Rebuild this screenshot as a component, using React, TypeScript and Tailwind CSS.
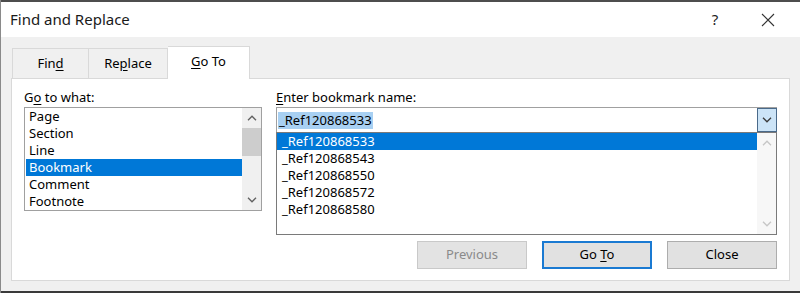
import React from "react";

const font = { fontFamily: '"Noto Sans", "Open Sans", Arial, sans-serif' };

function ChevronUp({ color = "#606060" }: { color?: string }) {
  return (
    <svg width="10" height="6" viewBox="0 0 10 6">
      <path d="M1 5.2 L5 1.2 L9 5.2" fill="none" stroke={color} strokeWidth="1.3" />
    </svg>
  );
}
function ChevronDown({ color = "#606060" }: { color?: string }) {
  return (
    <svg width="10" height="6" viewBox="0 0 10 6">
      <path d="M1 0.8 L5 4.8 L9 0.8" fill="none" stroke={color} strokeWidth="1.3" />
    </svg>
  );
}

const leftItems = ["Page", "Section", "Line", "Bookmark", "Comment", "Footnote"];
const refs = ["_Ref120868533", "_Ref120868543", "_Ref120868550", "_Ref120868572", "_Ref120868580"];

export default function App() {
  return (
    <div
      className="w-[800px] h-[293px] flex flex-col bg-[#f0f0f0] text-black overflow-hidden border-l border-[#8a8a8a]"
      style={font}
    >
      <div className="h-[2px] bg-[#4d4d4d]" />
      {/* Title bar */}
      <div className="h-[35px] bg-white flex items-center pl-[9px] shrink-0">
        <span className="text-[15px] text-[#1a1a1a]">Find and Replace</span>
        <div className="ml-auto flex items-center">
          <span className="text-[15px] text-[#222] w-[20px] text-center mr-[36px]">?</span>
          <svg width="14" height="14" viewBox="0 0 14 14" className="mr-[25px]">
            <path d="M1 1 L13 13 M13 1 L1 13" stroke="#333" strokeWidth="1.1" fill="none" />
          </svg>
        </div>
      </div>
      {/* Body */}
      <div className="flex-1 flex flex-col pl-[10px] pr-[10px] pt-[9px]">
        {/* Tabs */}
        <div className="h-[32px] flex items-end pl-[1px] text-[13px] relative z-10">
          <div className="w-[77px] h-[30px] border border-b-0 border-[#d9d9d9] flex items-center justify-center">
            <span>
              Fin<span className="underline underline-offset-2">d</span>
            </span>
          </div>
          <div className="w-[79px] h-[30px] border border-l-0 border-b-0 border-[#d9d9d9] flex items-center justify-center">
            <span>
              Re<span className="underline underline-offset-2">p</span>lace
            </span>
          </div>
          <div className="w-[82px] h-[33px] -mb-[1px] bg-white border border-l-0 border-b-0 border-[#d9d9d9] flex items-center justify-center pb-[2px]">
            <span>
              <span className="underline underline-offset-2">G</span>o To
            </span>
          </div>
        </div>
        {/* Panel */}
        <div className="h-[203px] bg-white border border-[#d9d9d9] flex flex-col px-[12px] pt-[9px] text-[13px]">
          <div className="flex gap-[14px]">
            {/* Left column */}
            <div className="w-[238px] flex flex-col">
              <div className="h-[18px] leading-[18px] mb-[1px]">
                G<span className="underline underline-offset-2">o</span> to what:
              </div>
              <div className="h-[104px] border border-[#a0a0a0] flex">
                <div className="flex-1 flex flex-col">
                  {leftItems.map((it) => (
                    <div
                      key={it}
                      className={
                        "h-[17px] leading-[17px] pl-[3px] ml-[1px] " +
                        (it === "Bookmark" ? "bg-[#0078d7] text-white" : "")
                      }
                    >
                      {it}
                    </div>
                  ))}
                </div>
                <div className="w-[19px] bg-[#f0f0f0] flex flex-col">
                  <div className="h-[20px] flex items-center justify-center">
                    <ChevronUp />
                  </div>
                  <div className="h-[28px] bg-[#cdcdcd]" />
                  <div className="flex-1" />
                  <div className="h-[20px] flex items-center justify-center">
                    <ChevronDown />
                  </div>
                </div>
              </div>
            </div>
            {/* Right column */}
            <div className="flex-1 flex flex-col">
              <div className="h-[18px] leading-[18px] mb-[1px]">
                <span className="underline underline-offset-2">E</span>nter bookmark name:
              </div>
              <div className="h-[25px] border border-[#a0a0a0] border-b-0 flex">
                <div className="flex-1 flex items-center pl-[1px]">
                  <span className="bg-[#a8d0f2] h-[17px] leading-[17px] px-[1px]">_Ref120868533</span>
                </div>
                <div className="w-[20px] h-[24px] -mr-[1px] bg-[#cce4f7] border border-[#4a6a8a] flex items-center justify-center">
                  <ChevronDown color="#3a3a3a" />
                </div>
              </div>
              <div className="h-[103px] border border-[#7a7a7a] flex">
                <div className="flex-1 flex flex-col">
                  {refs.map((r, i) => (
                    <div
                      key={r}
                      className={
                        "h-[17px] leading-[17px] pl-[5px] " + (i === 0 ? "bg-[#0078d7] text-white" : "")
                      }
                    >
                      {r}
                    </div>
                  ))}
                </div>
                <div className="w-[19px] bg-[#f7f7f7] flex flex-col">
                  <div className="h-[20px] flex items-center justify-center">
                    <ChevronUp color="#c6c6c6" />
                  </div>
                  <div className="flex-1" />
                  <div className="h-[20px] flex items-center justify-center">
                    <ChevronDown color="#c6c6c6" />
                  </div>
                </div>
              </div>
              {/* Buttons */}
              <div className="flex justify-end gap-[15px] mt-[6px]">
                <div className="w-[110px] h-[28px] bg-[#e3e3e3] border border-[#c9c9c9] text-[#8a8a8a] flex items-center justify-center">
                  Previous
                </div>
                <div className="w-[110px] h-[28px] bg-[#e1e1e1] border-2 border-[#1a7ad2] flex items-center justify-center">
                  <span>
                    Go <span className="underline underline-offset-2">T</span>o
                  </span>
                </div>
                <div className="w-[110px] h-[28px] bg-[#e1e1e1] border border-[#adadad] flex items-center justify-center">
                  Close
                </div>
              </div>
            </div>
          </div>
        </div>
      </div>
      <div className="h-[2px] bg-[#3a3a3a] mt-[10px]" />
    </div>
  );
}
